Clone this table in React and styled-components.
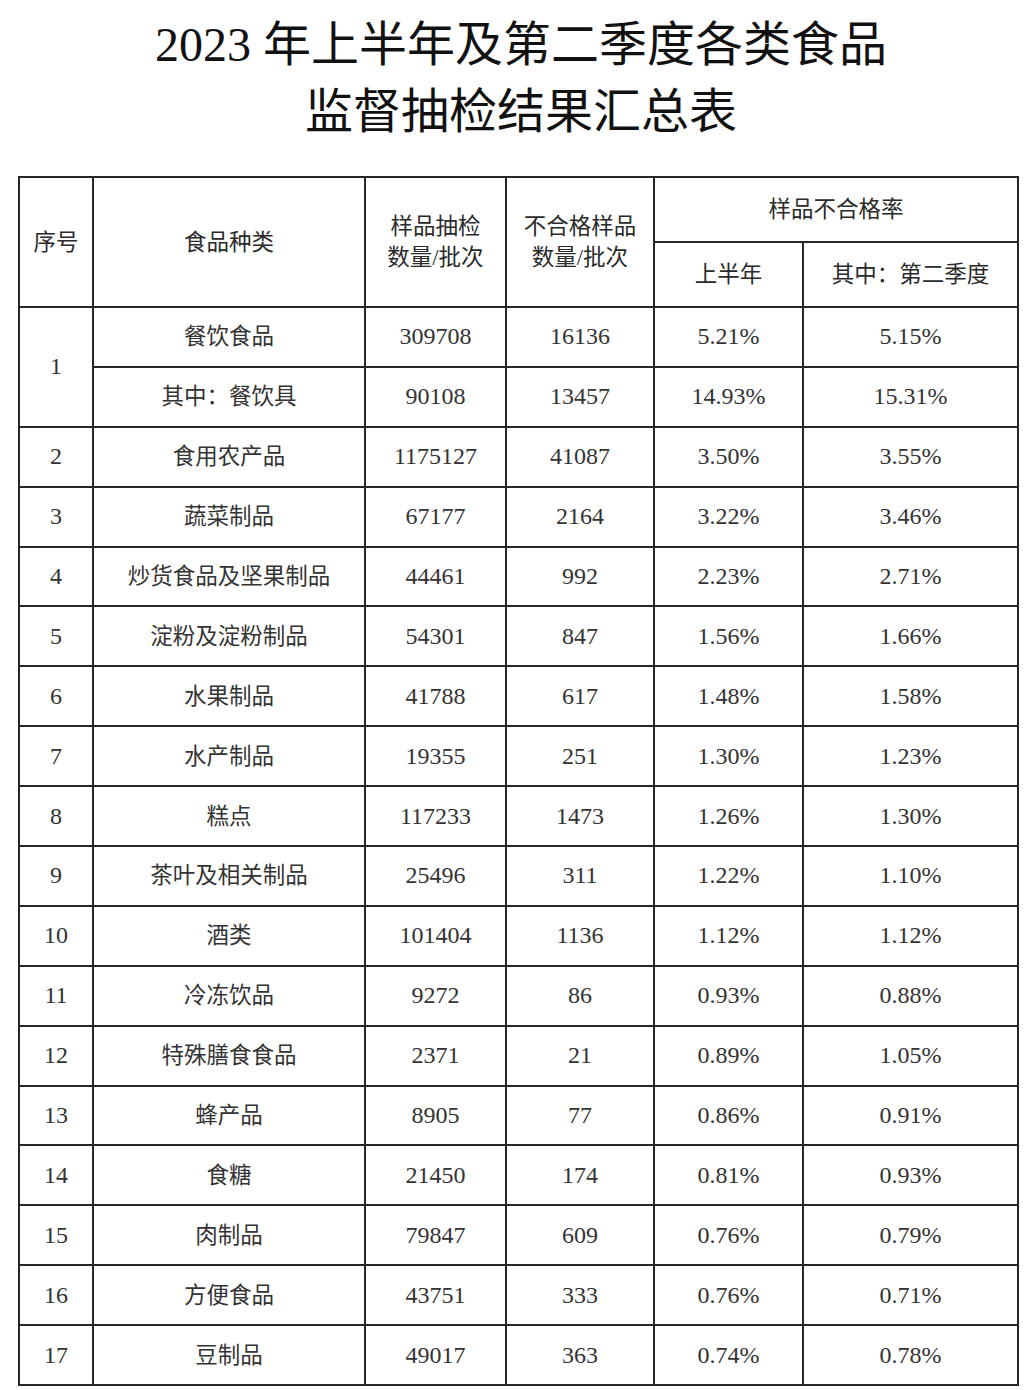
import React from "react";
import styled, { createGlobalStyle } from "styled-components";

const rows = [
  ["2", "食用农产品", "1175127", "41087", "3.50%", "3.55%"],
  ["3", "蔬菜制品", "67177", "2164", "3.22%", "3.46%"],
  ["4", "炒货食品及坚果制品", "44461", "992", "2.23%", "2.71%"],
  ["5", "淀粉及淀粉制品", "54301", "847", "1.56%", "1.66%"],
  ["6", "水果制品", "41788", "617", "1.48%", "1.58%"],
  ["7", "水产制品", "19355", "251", "1.30%", "1.23%"],
  ["8", "糕点", "117233", "1473", "1.26%", "1.30%"],
  ["9", "茶叶及相关制品", "25496", "311", "1.22%", "1.10%"],
  ["10", "酒类", "101404", "1136", "1.12%", "1.12%"],
  ["11", "冷冻饮品", "9272", "86", "0.93%", "0.88%"],
  ["12", "特殊膳食食品", "2371", "21", "0.89%", "1.05%"],
  ["13", "蜂产品", "8905", "77", "0.86%", "0.91%"],
  ["14", "食糖", "21450", "174", "0.81%", "0.93%"],
  ["15", "肉制品", "79847", "609", "0.76%", "0.79%"],
  ["16", "方便食品", "43751", "333", "0.76%", "0.71%"],
  ["17", "豆制品", "49017", "363", "0.74%", "0.78%"],
];

const Global = createGlobalStyle`
  body {
    margin: 0;
    background: #fff;
    font-family: "Liberation Serif", "Noto Sans CJK SC", serif;
  }
`;

const Page = styled.div`
  width: 1032px;
  padding-top: 11px;
  padding-bottom: 6px;
`;

const Title = styled.h1`
  margin: 0 0 31px;
  font-size: 48px;
  line-height: 67px;
  font-weight: 400;
  text-align: center;
  color: #111;
  padding-left: 10px;
`;

const Table = styled.table`
  margin-left: 18px;
  width: 999px;
  table-layout: fixed;
  border-collapse: collapse;
  border: 2px solid #1e1e1e;
  color: #333;
`;

const HeadRow = styled.tr`
  height: 65px;
`;

const Row = styled.tr`
  height: 59.9px;
`;

const Cell = styled.td`
  border: 2px solid #262626;
  padding: 0;
  text-align: center;
  vertical-align: middle;
  font-size: ${(p) => (p.$num ? "24px" : "22.5px")};
  line-height: 31px;
  white-space: nowrap;
`;

const HeadCell = styled(Cell).attrs({ as: "th" })`
  font-weight: 400;
  font-size: 22.5px;
  color: #2a2a2a;
`;

const App = () => {
  return (
    <Page>
      <Global />
      <Title>
        2023 年上半年及第二季度各类食品
        <br />
        监督抽检结果汇总表
      </Title>
      <Table>
        <colgroup>
          <col style={{ width: 74 }} />
          <col style={{ width: 272 }} />
          <col style={{ width: 141 }} />
          <col style={{ width: 148 }} />
          <col style={{ width: 149 }} />
          <col style={{ width: 215 }} />
        </colgroup>
        <thead>
          <HeadRow>
            <HeadCell rowSpan={2}>序号</HeadCell>
            <HeadCell rowSpan={2}>食品种类</HeadCell>
            <HeadCell rowSpan={2}>
              样品抽检
              <br />
              数量/批次
            </HeadCell>
            <HeadCell rowSpan={2}>
              不合格样品
              <br />
              数量/批次
            </HeadCell>
            <HeadCell colSpan={2}>样品不合格率</HeadCell>
          </HeadRow>
          <HeadRow>
            <HeadCell>上半年</HeadCell>
            <HeadCell>其中：第二季度</HeadCell>
          </HeadRow>
        </thead>
        <tbody>
          <Row>
            <Cell rowSpan={2} $num>
              1
            </Cell>
            <Cell>餐饮食品</Cell>
            <Cell $num>309708</Cell>
            <Cell $num>16136</Cell>
            <Cell $num>5.21%</Cell>
            <Cell $num>5.15%</Cell>
          </Row>
          <Row>
            <Cell>其中：餐饮具</Cell>
            <Cell $num>90108</Cell>
            <Cell $num>13457</Cell>
            <Cell $num>14.93%</Cell>
            <Cell $num>15.31%</Cell>
          </Row>
          {rows.map((r) => (
            <Row key={r[0]}>
              <Cell $num>{r[0]}</Cell>
              <Cell>{r[1]}</Cell>
              <Cell $num>{r[2]}</Cell>
              <Cell $num>{r[3]}</Cell>
              <Cell $num>{r[4]}</Cell>
              <Cell $num>{r[5]}</Cell>
            </Row>
          ))}
        </tbody>
      </Table>
    </Page>
  );
};

export default App;
